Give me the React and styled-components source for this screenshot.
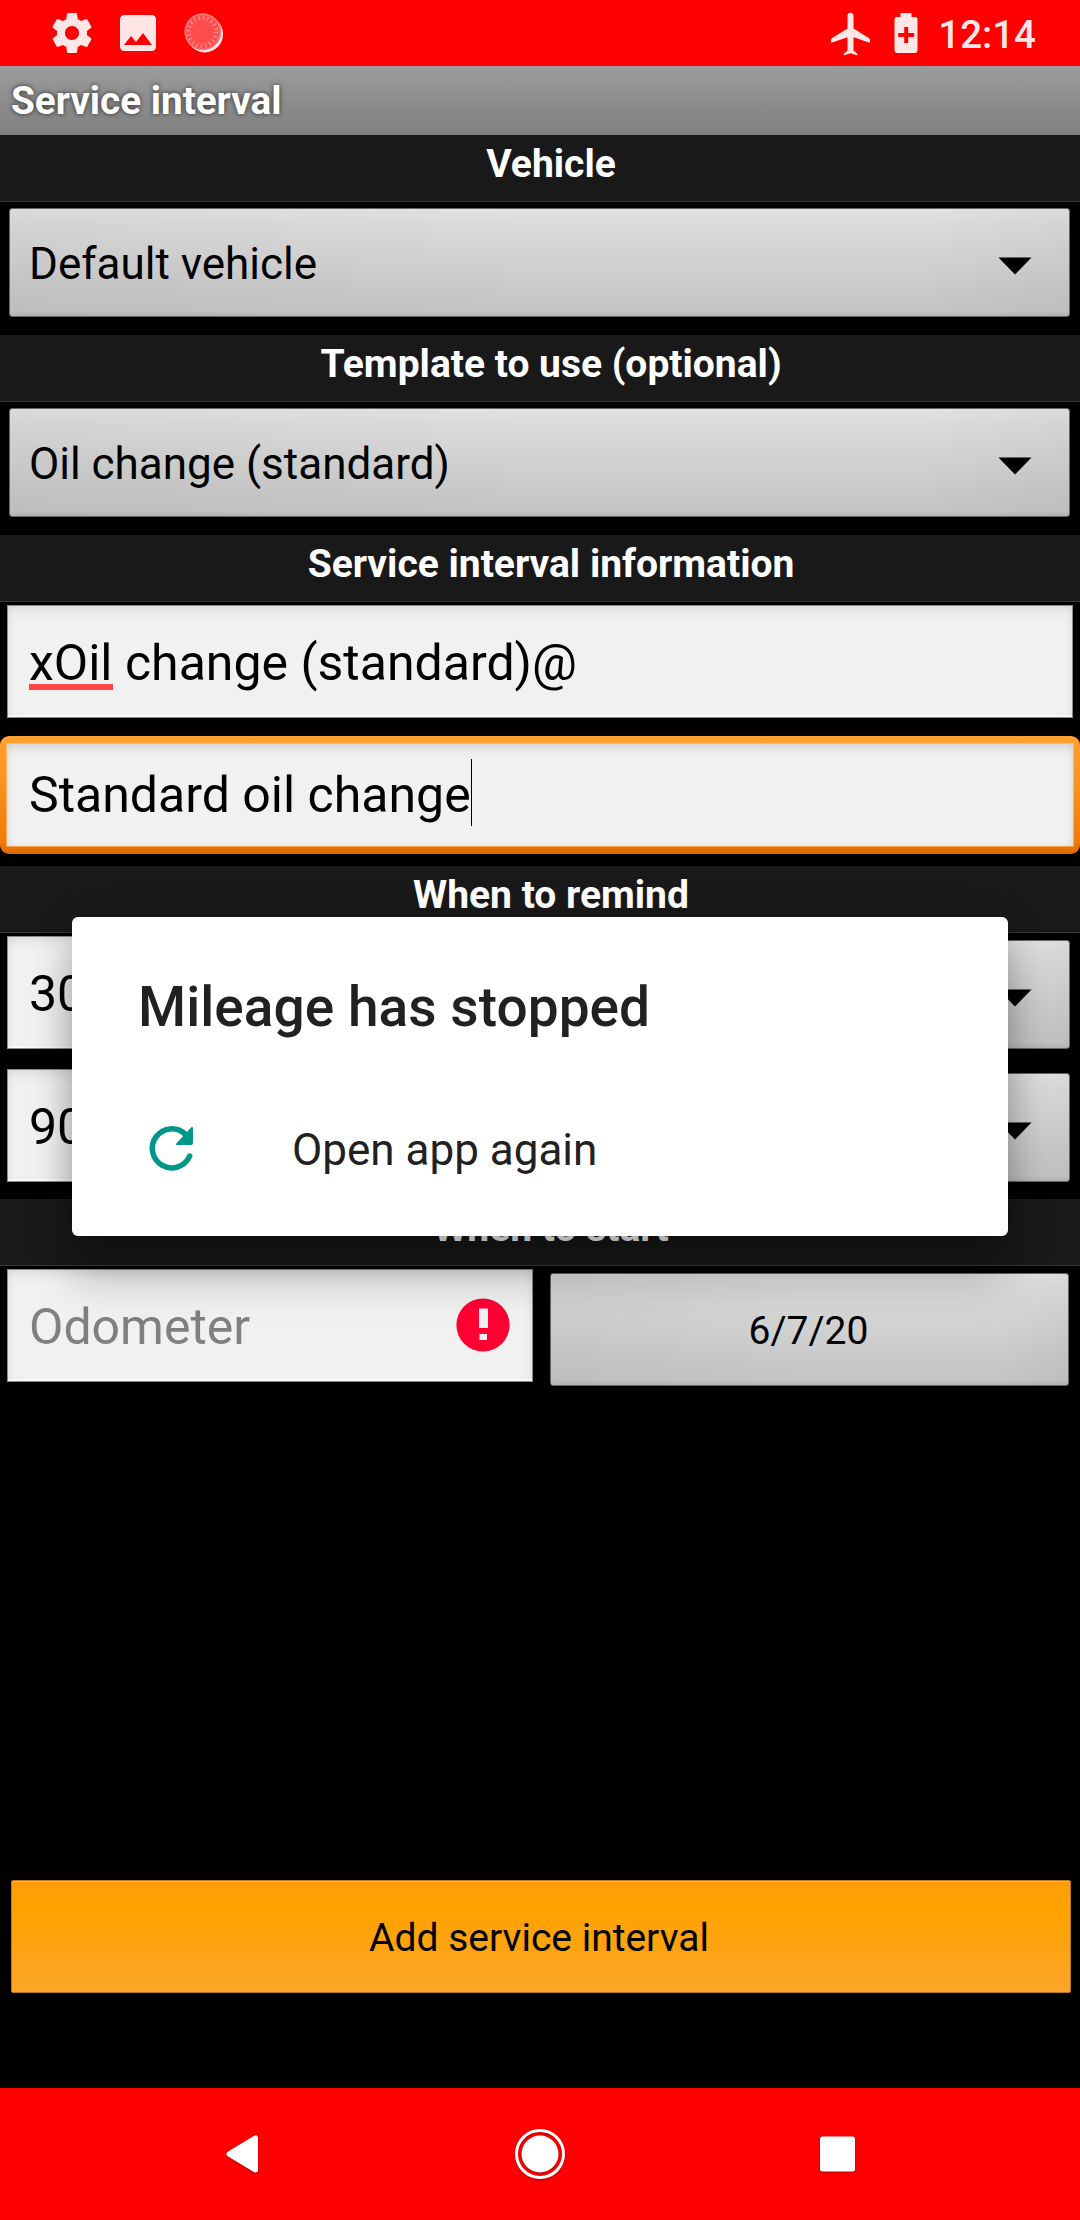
import React from "react";
import styled, { createGlobalStyle, css } from "styled-components";

const GlobalStyle = createGlobalStyle`
  *, *::before, *::after { box-sizing: border-box; }
  html, body { margin: 0; padding: 0; background: #000; }
  body { font-family: Roboto, "Noto Sans", sans-serif; }
`;

const Screen = styled.div`
  position: relative;
  display: flex;
  flex-direction: column;
  width: 1080px;
  height: 2220px;
  overflow: hidden;
  background: #000;
  color: #000;
`;

/* ---------- system bars ---------- */

const StatusBar = styled.header`
  display: flex;
  justify-content: space-between;
  align-items: center;
  flex: none;
  height: 66px;
  padding: 0 44px 0 48px;
  background: #f00;
`;

const StatusGroup = styled.div`
  display: flex;
  align-items: center;
  gap: ${(p) => p.$gap}px;
`;

const StatusIcon = styled.svg`
  display: block;
  flex: none;
  width: ${(p) => p.$width || 48}px;
  height: 48px;
  fill: #ffe6e6;
`;

const Clock = styled.span`
  padding-top: 3px;
  font-size: 38.5px;
  line-height: 46px;
  font-weight: 500;
  color: #ffe6e6;
`;

const NavBar = styled.nav`
  display: flex;
  justify-content: center;
  align-items: center;
  flex: none;
  height: 132px;
  background: #f00;
`;

const NavButton = styled.div`
  display: flex;
  justify-content: center;
  width: 298px;

  svg {
    display: block;
    width: 60px;
    height: 60px;
    filter: drop-shadow(0 1px 1px rgba(0, 0, 0, 0.3));
  }
`;

/* ---------- form ---------- */

const TitleBar = styled.h1`
  flex: none;
  height: 69px;
  margin: 0;
  padding-left: 11px;
  background: linear-gradient(#9b9b9b, #808080);
  color: #fff;
  font-size: 38.7px;
  line-height: 70px;
  font-weight: 700;
  text-shadow: 0 0 5px rgba(0, 0, 0, 0.7);
`;

const Form = styled.main`
  display: flex;
  flex-direction: column;
  flex: 1;
`;

const SectionHeader = styled.h2`
  flex: none;
  height: 67px;
  margin: 0;
  padding-left: 22px;
  border-bottom: 1px solid #383838;
  background: #191919;
  color: #fff;
  font-size: 39px;
  line-height: 58px;
  font-weight: 700;
  text-align: center;
`;

const SectionBody = styled.div`
  display: flex;
  flex-direction: column;
  flex: none;
  height: ${(p) => p.$height}px;
`;

const FieldRow = styled.div`
  display: flex;
  align-items: flex-start;
  flex: none;
  height: 133px;
`;

const grayPlate = css`
  border: 1px solid #666;
  border-radius: 3px;
  background:
    linear-gradient(92deg, rgba(0, 0, 0, 0.035), transparent 50%, transparent 86%, rgba(0, 0, 0, 0.035)),
    linear-gradient(#e2e2e2, #dcdcdc 12%, #c8c8c8 80%, #c5c5c5 95%, #b8b8b8);
`;

const SpinnerBox = styled.div`
  display: flex;
  align-items: center;
  justify-content: space-between;
  flex: ${(p) => (p.$half ? 1 : "none")};
  height: 109px;
  margin: ${(p) => (p.$half ? "7px 10px 0 10px" : "6px 10px 0 9px")};
  padding: 2px 37px 0 19px;
  font-size: 44px;
  line-height: 52px;
  ${grayPlate}
`;

const Arrow = styled.svg`
  display: block;
  width: 34px;
  height: 18px;
  margin-top: 4px;
`;

const DateButton = styled.div`
  flex: 1;
  height: 113px;
  margin: 7px 11px 0 17px;
  padding-right: 2px;
  font-size: 39px;
  line-height: 115px;
  text-align: center;
  ${grayPlate}
`;

const Field = styled.div`
  display: flex;
  align-items: center;
  justify-content: space-between;
  flex: none;
  width: ${(p) => p.$width}px;
  height: 113px;
  margin: 3px 0 0 7px;
  padding: 3px 22px 0 21px;
  border: 1px solid #8a8a8a;
  background: #f1f1f1;
  box-shadow: inset 0 8px 14px -4px rgba(0, 0, 0, 0.08), inset 0 0 8px rgba(0, 0, 0, 0.05), inset 0 -2px 0 #fff;
  color: ${(p) => (p.$hint ? "#808080" : "#000")};
  font-size: 50px;
  line-height: 58px;
  white-space: nowrap;
`;

const FocusRing = styled.div`
  width: 1080px;
  height: 118px;
  margin-top: 1px;
  padding: 8px 7px;
  border-radius: 9px;
  background: linear-gradient(#ffa030, #fb9524 35%, #f07a08 90%, #d96a00);
`;

const FocusedField = styled.div`
  display: flex;
  align-items: center;
  height: 102px;
  padding-left: 22px;
  background: #f1f1f1;
  box-shadow: inset 0 8px 14px -4px rgba(0, 0, 0, 0.1), inset 0 0 6px rgba(0, 0, 0, 0.08), 0 0 0 1px rgba(255, 214, 160, 0.5);
  font-size: 50px;
  line-height: 58px;
`;

const Caret = styled.span`
  width: 1px;
  height: 67px;
  margin-top: -5px;
  background: #000;
`;

const Misspelled = styled.span`
  display: inline-block;
  height: 58px;
  background: linear-gradient(#ff4444, #ff4444) 0 50px / 100% 6px no-repeat;
`;

const ErrorIcon = styled.svg`
  display: block;
  width: 54px;
  height: 54px;
  margin-top: -5px;
`;

const Spacer = styled.div`
  flex: 1;
`;

const AddButton = styled.div`
  flex: none;
  height: 113px;
  margin: 0 9px 95px 11px;
  padding-right: 4px;
  border: 1px solid #b87a1c;
  border-radius: 2px;
  background: linear-gradient(#ff9c08, #ffa200 25%, #fea30c 50%, #fca524 90%, #fba62a);
  box-shadow: inset 0 1px 0 rgba(255, 200, 110, 0.5);
  font-size: 39px;
  line-height: 114px;
  text-align: center;
`;

/* ---------- crash dialog ---------- */

const Dialog = styled.section`
  position: absolute;
  left: 72px;
  top: 917px;
  width: 936px;
  height: 319px;
  padding: 57px 66px 0;
  border-radius: 6px;
  background: #fff;
  box-shadow: 0 45px 44px rgba(0, 0, 0, 0.2), 0 6px 36px rgba(0, 0, 0, 0.22);
  color: #212121;
`;

const DialogTitle = styled.h3`
  margin: 0;
  font-size: 55px;
  line-height: 66px;
  font-weight: 500;
  letter-spacing: 0.05px;
`;

const DialogAction = styled.div`
  display: flex;
  align-items: center;
  gap: 87px;
  margin-top: 77px;
  padding-left: 1px;
  font-size: 44px;
  line-height: 66px;

  svg {
    display: block;
    width: 66px;
    height: 66px;
    margin-top: -4px;
  }
`;

const GearIcon = () => (
  <StatusIcon viewBox="0 0 24 24">
    <path d="M19.43 12.98c.04-.32.07-.64.07-.98s-.03-.66-.07-.98l2.11-1.65c.19-.15.24-.42.12-.64l-2-3.46c-.12-.22-.39-.3-.61-.22l-2.49 1c-.52-.4-1.08-.73-1.69-.98l-.38-2.65C14.46 2.18 14.25 2 14 2h-4c-.25 0-.46.18-.49.42l-.38 2.65c-.61.25-1.17.59-1.69.98l-2.49-1c-.23-.09-.49 0-.61.22l-2 3.46c-.13.22-.07.49.12.64l2.11 1.65c-.04.32-.07.65-.07.98s.03.66.07.98l-2.11 1.65c-.19.15-.24.42-.12.64l2 3.46c.12.22.39.3.61.22l2.49-1c.52.4 1.08.73 1.69.98l.38 2.65c.03.24.24.42.49.42h4c.25 0 .46-.18.49-.42l.38-2.65c.61-.25 1.17-.59 1.69-.98l2.49 1c.23.09.49 0 .61-.22l2-3.46c.12-.22.07-.49-.12-.64l-2.11-1.65zM12 15.5c-1.93 0-3.5-1.57-3.5-3.5s1.57-3.5 3.5-3.5 3.5 1.57 3.5 3.5-1.57 3.5-3.5 3.5z" />
  </StatusIcon>
);

const ImageIcon = () => (
  <StatusIcon viewBox="0 0 24 24">
    <path d="M21 19V5c0-1.1-.9-2-2-2H5c-1.1 0-2 .9-2 2v14c0 1.1.9 2 2 2h14c1.1 0 2-.9 2-2zM8.5 13.5l2.5 3.01L14.5 12l4.5 6H5l3.5-4.5z" />
  </StatusIcon>
);

const DialIcon = () => (
  <StatusIcon viewBox="0 0 48 48">
    <circle cx="24.8" cy="25.2" r="18.2" fill="#ffe6e6" />
    <circle cx="22.8" cy="22.8" r="18.2" fill="#ff4d4d" />
    <circle cx="22.8" cy="22.8" r="17.6" fill="none" stroke="#ff7c7c" strokeWidth="1.5" />
    <circle cx="22.3" cy="22.8" r="14" fill="none" stroke="#ff8484" strokeWidth="4.5" strokeDasharray="1.5 2.9" />
  </StatusIcon>
);

const PlaneIcon = () => (
  <StatusIcon viewBox="0 0 48 48">
    <path
      d="M21.5 6.3a3 3 0 0 1 6 0V19L42.8 28.6c.8.5 1.2 1.2 1.2 2.1v1.6c0 .6-.5 1-1.1.8L27.5 27.7v13.4l3.3 2.6c.5.4.7.9.7 1.5 0 .4-.4.7-.8.5L24.5 43.7l-6.2 2c-.4.2-.8-.1-.8-.5 0-.6.2-1.1.7-1.5l3.3-2.6V27.7L6.1 33.1c-.6.2-1.1-.2-1.1-.8v-1.6c0-.9.4-1.6 1.2-2.1L21.5 19z"
      transform="translate(0 .5)"
    />
  </StatusIcon>
);

const BatteryIcon = () => (
  <StatusIcon viewBox="0 0 24 48" $width={24}>
    <path
      fillRule="evenodd"
      d="M6.5 4h11v4h3.6a2.4 2.4 0 0 1 2.4 2.4v31.2a2.4 2.4 0 0 1-2.4 2.4H2.9a2.4 2.4 0 0 1-2.4-2.4V10.4A2.4 2.4 0 0 1 2.9 8H6.5zM10.2 18v6H4.2v4h6v6h4v-6h6v-4h-6v-6z"
    />
  </StatusIcon>
);

const Spinner = ({ label, half }) => (
  <SpinnerBox $half={half}>
    <span>{label}</span>
    <Arrow viewBox="0 0 34 18">
      <path d="M.5 .5H33.5L17 17.5z" />
    </Arrow>
  </SpinnerBox>
);

export default function App() {
  return (
    <Screen>
      <GlobalStyle />
      <StatusBar>
        <StatusGroup $gap={18}>
          <GearIcon />
          <ImageIcon />
          <DialIcon />
        </StatusGroup>
        <StatusGroup $gap={20}>
          <PlaneIcon />
          <BatteryIcon />
          <Clock>12:14</Clock>
        </StatusGroup>
      </StatusBar>

      <TitleBar>Service interval</TitleBar>

      <Form>
        <SectionHeader>Vehicle</SectionHeader>
        <SectionBody $height={133}>
          <Spinner label="Default vehicle" />
        </SectionBody>

        <SectionHeader>Template to use (optional)</SectionHeader>
        <SectionBody $height={133}>
          <Spinner label="Oil change (standard)" />
        </SectionBody>

        <SectionHeader>Service interval information</SectionHeader>
        <SectionBody $height={264}>
          <FieldRow>
            <Field $width={1066}>
              <span>
                <Misspelled>xOil</Misspelled> change (standard)@
              </span>
            </Field>
          </FieldRow>
          <FieldRow>
            <FocusRing>
              <FocusedField>
                Standard oil change
                <Caret />
              </FocusedField>
            </FocusRing>
          </FieldRow>
        </SectionBody>

        <SectionHeader>When to remind</SectionHeader>
        <SectionBody $height={266}>
          <FieldRow>
            <Field $width={526}>3000</Field>
            <Spinner half />
          </FieldRow>
          <FieldRow>
            <Field $width={526}>90</Field>
            <Spinner half />
          </FieldRow>
        </SectionBody>

        <SectionHeader>When to start</SectionHeader>
        <SectionBody $height={133}>
          <FieldRow>
            <Field $width={526} $hint>
              Odometer
              <ErrorIcon viewBox="0 0 54 54">
                <circle cx="27" cy="27" r="26.6" fill="#ff0033" />
                <path d="M23 10.5h9v19.5h-9zM23.5 36h7.5v6h-7.5z" fill="#f1f1f1" />
              </ErrorIcon>
            </Field>
            <DateButton>6/7/20</DateButton>
          </FieldRow>
        </SectionBody>

        <Spacer />
        <AddButton>Add service interval</AddButton>
      </Form>

      <NavBar>
        <NavButton>
          <svg viewBox="0 0 60 60">
            <path d="M43.5 14v32L17 30z" fill="#fff" stroke="#fff" strokeWidth="5" strokeLinejoin="round" />
          </svg>
        </NavButton>
        <NavButton>
          <svg viewBox="0 0 60 60">
            <circle cx="30" cy="30" r="23.5" fill="none" stroke="#fff" strokeWidth="3" />
            <circle cx="30" cy="30" r="18.5" fill="#fff" />
          </svg>
        </NavButton>
        <NavButton>
          <svg viewBox="0 0 60 60">
            <rect x="12" y="12.5" width="35" height="35" rx="2.5" fill="#fff" />
          </svg>
        </NavButton>
      </NavBar>

      <Dialog>
        <DialogTitle>Mileage has stopped</DialogTitle>
        <DialogAction>
          <svg viewBox="0 0 66 66">
            <path
              d="M50.7 41A19.5 19.5 0 1 1 46.5 19.5"
              fill="none"
              stroke="#009688"
              strokeWidth="5.5"
              strokeLinecap="round"
            />
            <path d="M54 13v15a2 2 0 0 1-2 2H38c-.9 0-1.300-1-.7-1.600L52.300 12.300c.6-.6 1.700-.2 1.700.7z" fill="#009688" />
          </svg>
          <span>Open app again</span>
        </DialogAction>
      </Dialog>
    </Screen>
  );
}
